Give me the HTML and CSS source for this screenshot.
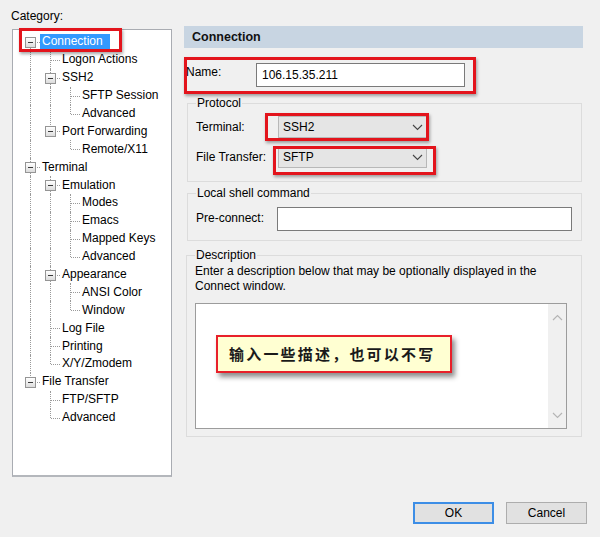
FILE: index.html
```html
<!DOCTYPE html>
<html>
<head>
<meta charset="utf-8">
<link rel="stylesheet" href="styles.css">
</head>
<body>
<div class="dialog">
  <div class="main">
    <div class="left">
      <div class="cat-label">Category:</div>
      <div class="tree">
        <div class="row"><span class="c f"><span class="box"></span></span><span class="txt sel">Connection</span></div>
        <div class="row"><span class="c v"></span><span class="c t"></span><span class="txt">Logon Actions</span></div>
        <div class="row"><span class="c v"></span><span class="c t"><span class="box"></span></span><span class="txt">SSH2</span></div>
        <div class="row"><span class="c v"></span><span class="c v"></span><span class="c t"></span><span class="txt">SFTP Session</span></div>
        <div class="row"><span class="c v"></span><span class="c v"></span><span class="c l"></span><span class="txt">Advanced</span></div>
        <div class="row"><span class="c v"></span><span class="c l"><span class="box"></span></span><span class="txt">Port Forwarding</span></div>
        <div class="row"><span class="c v"></span><span class="c"></span><span class="c l"></span><span class="txt">Remote/X11</span></div>
        <div class="row"><span class="c t"><span class="box"></span></span><span class="txt">Terminal</span></div>
        <div class="row"><span class="c v"></span><span class="c t"><span class="box"></span></span><span class="txt">Emulation</span></div>
        <div class="row"><span class="c v"></span><span class="c v"></span><span class="c t"></span><span class="txt">Modes</span></div>
        <div class="row"><span class="c v"></span><span class="c v"></span><span class="c t"></span><span class="txt">Emacs</span></div>
        <div class="row"><span class="c v"></span><span class="c v"></span><span class="c t"></span><span class="txt">Mapped Keys</span></div>
        <div class="row"><span class="c v"></span><span class="c v"></span><span class="c l"></span><span class="txt">Advanced</span></div>
        <div class="row"><span class="c v"></span><span class="c t"><span class="box"></span></span><span class="txt">Appearance</span></div>
        <div class="row"><span class="c v"></span><span class="c v"></span><span class="c t"></span><span class="txt">ANSI Color</span></div>
        <div class="row"><span class="c v"></span><span class="c v"></span><span class="c l"></span><span class="txt">Window</span></div>
        <div class="row"><span class="c v"></span><span class="c t"></span><span class="txt">Log File</span></div>
        <div class="row"><span class="c v"></span><span class="c t"></span><span class="txt">Printing</span></div>
        <div class="row"><span class="c v"></span><span class="c l"></span><span class="txt">X/Y/Zmodem</span></div>
        <div class="row"><span class="c l"><span class="box"></span></span><span class="txt">File Transfer</span></div>
        <div class="row"><span class="c"></span><span class="c t"></span><span class="txt">FTP/SFTP</span></div>
        <div class="row"><span class="c"></span><span class="c l"></span><span class="txt">Advanced</span></div>
      </div>
    </div>
    <div class="right">
      <div class="header">Connection</div>
      <div class="name-row">
        <span class="lbl name-lbl">Name:</span>
        <div class="input name-input">106.15.35.211</div>
      </div>
      <fieldset class="grp protocol">
        <legend>Protocol</legend>
        <div class="frow">
          <span class="lbl w82">Terminal:</span>
          <div class="select">SSH2<svg class="chev" width="11" height="7" viewBox="0 0 11 7"><path d="M1 1 L5.5 5.5 L10 1" fill="none" stroke="#444" stroke-width="1.1"/></svg></div>
        </div>
        <div class="frow">
          <span class="lbl w82">File Transfer:</span>
          <div class="select">SFTP<svg class="chev" width="11" height="7" viewBox="0 0 11 7"><path d="M1 1 L5.5 5.5 L10 1" fill="none" stroke="#444" stroke-width="1.1"/></svg></div>
        </div>
      </fieldset>
      <fieldset class="grp local">
        <legend>Local shell command</legend>
        <div class="frow">
          <span class="lbl w81">Pre-connect:</span>
          <div class="input pre-input"></div>
        </div>
      </fieldset>
      <fieldset class="grp desc">
        <legend>Description</legend>
        <div class="desc-text">Enter a description below that may be optionally displayed in the Connect window.</div>
        <div class="textarea">
          <div class="ta-body">
            <div class="callout">输入一些描述，也可以不写</div>
          </div>
          <div class="scroll">
            <svg width="11" height="7" viewBox="0 0 11 7"><path d="M1 6 L5.5 1.5 L10 6" fill="none" stroke="#b5b5b5" stroke-width="1.2"/></svg>
            <svg width="11" height="7" viewBox="0 0 11 7"><path d="M1 1 L5.5 5.5 L10 1" fill="none" stroke="#b5b5b5" stroke-width="1.2"/></svg>
          </div>
        </div>
      </fieldset>
    </div>
  </div>
  <div class="buttons">
    <button class="btn ok">OK</button>
    <button class="btn">Cancel</button>
  </div>
  <span class="anno a-conn"></span>
  <span class="anno a-name"></span>
  <span class="anno a-term"></span>
  <span class="anno a-ft"></span>
</div>
</body>
</html>
```

FILE: styles.css
```css
html, body {
  margin: 0;
  padding: 0;
}
body {
  background: #f0f0f0;
  font-family: "Liberation Sans", Arial, sans-serif;
  font-size: 12px;
  color: #000;
}
.dialog {
  position: relative;
  width: 600px;
  height: 537px;
  box-sizing: border-box;
  overflow: hidden;
}
.main {
  display: flex;
  align-items: flex-start;
  padding-left: 10px;
}
.left {
  width: 162px;
  padding-top: 9px;
}
.cat-label {
  line-height: 14px;
  height: 14px;
  padding-left: 1px;
}
.tree {
  margin-top: 6px;
  margin-left: 2px;
  width: 160px;
  height: 448px;
  box-sizing: border-box;
  background: #fff;
  border: 1px solid #a9acb2;
  border-bottom: 2px solid #b4b7bc;
  padding: 3px 0 0 7px;
}
.row {
  display: flex;
  align-items: center;
  height: 17.9px;
}
.c {
  position: relative;
  width: 20px;
  height: 18px;
  flex: none;
}
.c.v::before,
.c.t::before {
  content: "";
  position: absolute;
  left: 10px;
  top: 0;
  bottom: 0;
  border-left: 1px dotted #9a9a9a;
}
.c.l::before {
  content: "";
  position: absolute;
  left: 10px;
  top: 0;
  height: 9px;
  border-left: 1px dotted #9a9a9a;
}
.c.f::before {
  content: "";
  position: absolute;
  left: 10px;
  top: 9px;
  bottom: 0;
  border-left: 1px dotted #9a9a9a;
}
.c.t::after,
.c.l::after,
.c.f::after {
  content: "";
  position: absolute;
  left: 11px;
  width: 9px;
  top: 9px;
  border-top: 1px dotted #9a9a9a;
}
.box {
  position: absolute;
  left: 5px;
  top: 4px;
  width: 9px;
  height: 9px;
  border: 1px solid #959595;
  background: linear-gradient(#ffffff, #dcdcdc);
  z-index: 1;
}
.box::after {
  content: "";
  position: absolute;
  left: 2px;
  top: 4px;
  width: 5px;
  height: 1px;
  background: #3a3a3a;
}
.txt {
  margin-left: 2px;
  line-height: 15px;
  white-space: nowrap;
}
.txt.sel {
  margin-left: 0;
  background: #3399ff;
  color: #fff;
  padding: 0 7px 0 2px;
}
.right {
  margin-left: 12px;
  margin-top: 26px;
  width: 399px;
}
.header {
  height: 22px;
  line-height: 22px;
  background: #c8d5e2;
  font-weight: bold;
  font-size: 12.5px;
  padding-left: 8px;
  color: #111;
}
.name-row {
  display: flex;
  align-items: center;
  margin-top: 15px;
  height: 24px;
}
.lbl {
  flex: none;
  white-space: nowrap;
}
.name-lbl {
  width: 72px;
  padding-left: 2px;
  box-sizing: border-box;
  margin-top: -6px;
}
.input {
  box-sizing: border-box;
  height: 24px;
  background: #fff;
  border: 1px solid #7a7a7a;
  line-height: 22px;
  padding-left: 5px;
}
.name-input {
  width: 209px;
}
.grp {
  margin: 0 1px 0 3px;
  border: 1px solid #dcdcdc;
  padding: 0 8px;
  min-width: 0;
}
.grp legend {
  padding: 0 1px;
  line-height: 14px;
}
.protocol {
  margin-top: 9px;
  padding-top: 6px;
  padding-bottom: 13px;
}
.frow {
  display: flex;
  align-items: center;
  height: 22px;
}
.frow + .frow {
  margin-top: 8px;
}
.w82 { width: 82px; }
.w81 { width: 81px; }
.select {
  position: relative;
  box-sizing: border-box;
  width: 149px;
  height: 22px;
  background: #e5e5e5;
  border: 1px solid #b8b8b8;
  line-height: 20px;
  padding-left: 4px;
  display: flex;
  align-items: center;
  justify-content: space-between;
  padding-right: 3px;
}
.local {
  margin-top: 4px;
  padding-top: 7px;
  padding-bottom: 9px;
}
.local .frow {
  height: 24px;
}
.local .lbl {
  margin-top: -3px;
}
.pre-input {
  width: 295px;
}
.desc {
  margin-top: 7px;
  margin-left: 2px;
  padding-top: 2px;
  padding-bottom: 7px;
}
.desc-text {
  line-height: 15px;
  width: 372px;
}
.textarea {
  margin-top: 9px;
  width: 372px;
  height: 126px;
  box-sizing: border-box;
  border: 1px solid #9c9c9c;
  background: #fff;
  display: flex;
}
.ta-body {
  flex: 1;
  padding: 31px 0 0 20px;
}
.callout {
  display: inline-block;
  box-sizing: border-box;
  width: 236px;
  height: 38px;
  background: #ffffd2;
  border: 2px solid #e8202a;
  box-shadow: 3px 4px 5px rgba(0, 0, 0, 0.45);
  font-family: "Noto Sans CJK SC", sans-serif;
  font-weight: bold;
  font-size: 15px;
  letter-spacing: 2.2px;
  line-height: 34px;
  padding-left: 11px;
  color: #1a1a1a;
}
.scroll {
  width: 18px;
  background: #f0f0f0;
  display: flex;
  flex-direction: column;
  align-items: center;
  justify-content: space-between;
  padding: 10px 0 9px;
  box-sizing: border-box;
}
.buttons {
  display: flex;
  justify-content: flex-end;
  gap: 12px;
  margin-top: 25px;
  padding-right: 13px;
}
.btn {
  width: 81px;
  height: 22px;
  box-sizing: border-box;
  background: #e1e1e1;
  border: 1px solid #adadad;
  font-family: "Liberation Sans", Arial, sans-serif;
  font-size: 12px;
  color: #000;
  padding: 0;
}
.btn.ok {
  border: 2px solid #3d8ee6;
}
.anno {
  position: absolute;
  box-sizing: border-box;
  border: 3px solid #e3141c;
  box-shadow: 1px 2px 3px rgba(0, 0, 0, 0.35);
}
.a-conn { left: 19px; top: 28px; width: 103px; height: 24px; }
.a-name { left: 184px; top: 57px; width: 292px; height: 37px; }
.a-term { left: 265px; top: 113px; width: 164px; height: 28px; }
.a-ft { left: 273px; top: 146px; width: 163px; height: 29px; }
```
